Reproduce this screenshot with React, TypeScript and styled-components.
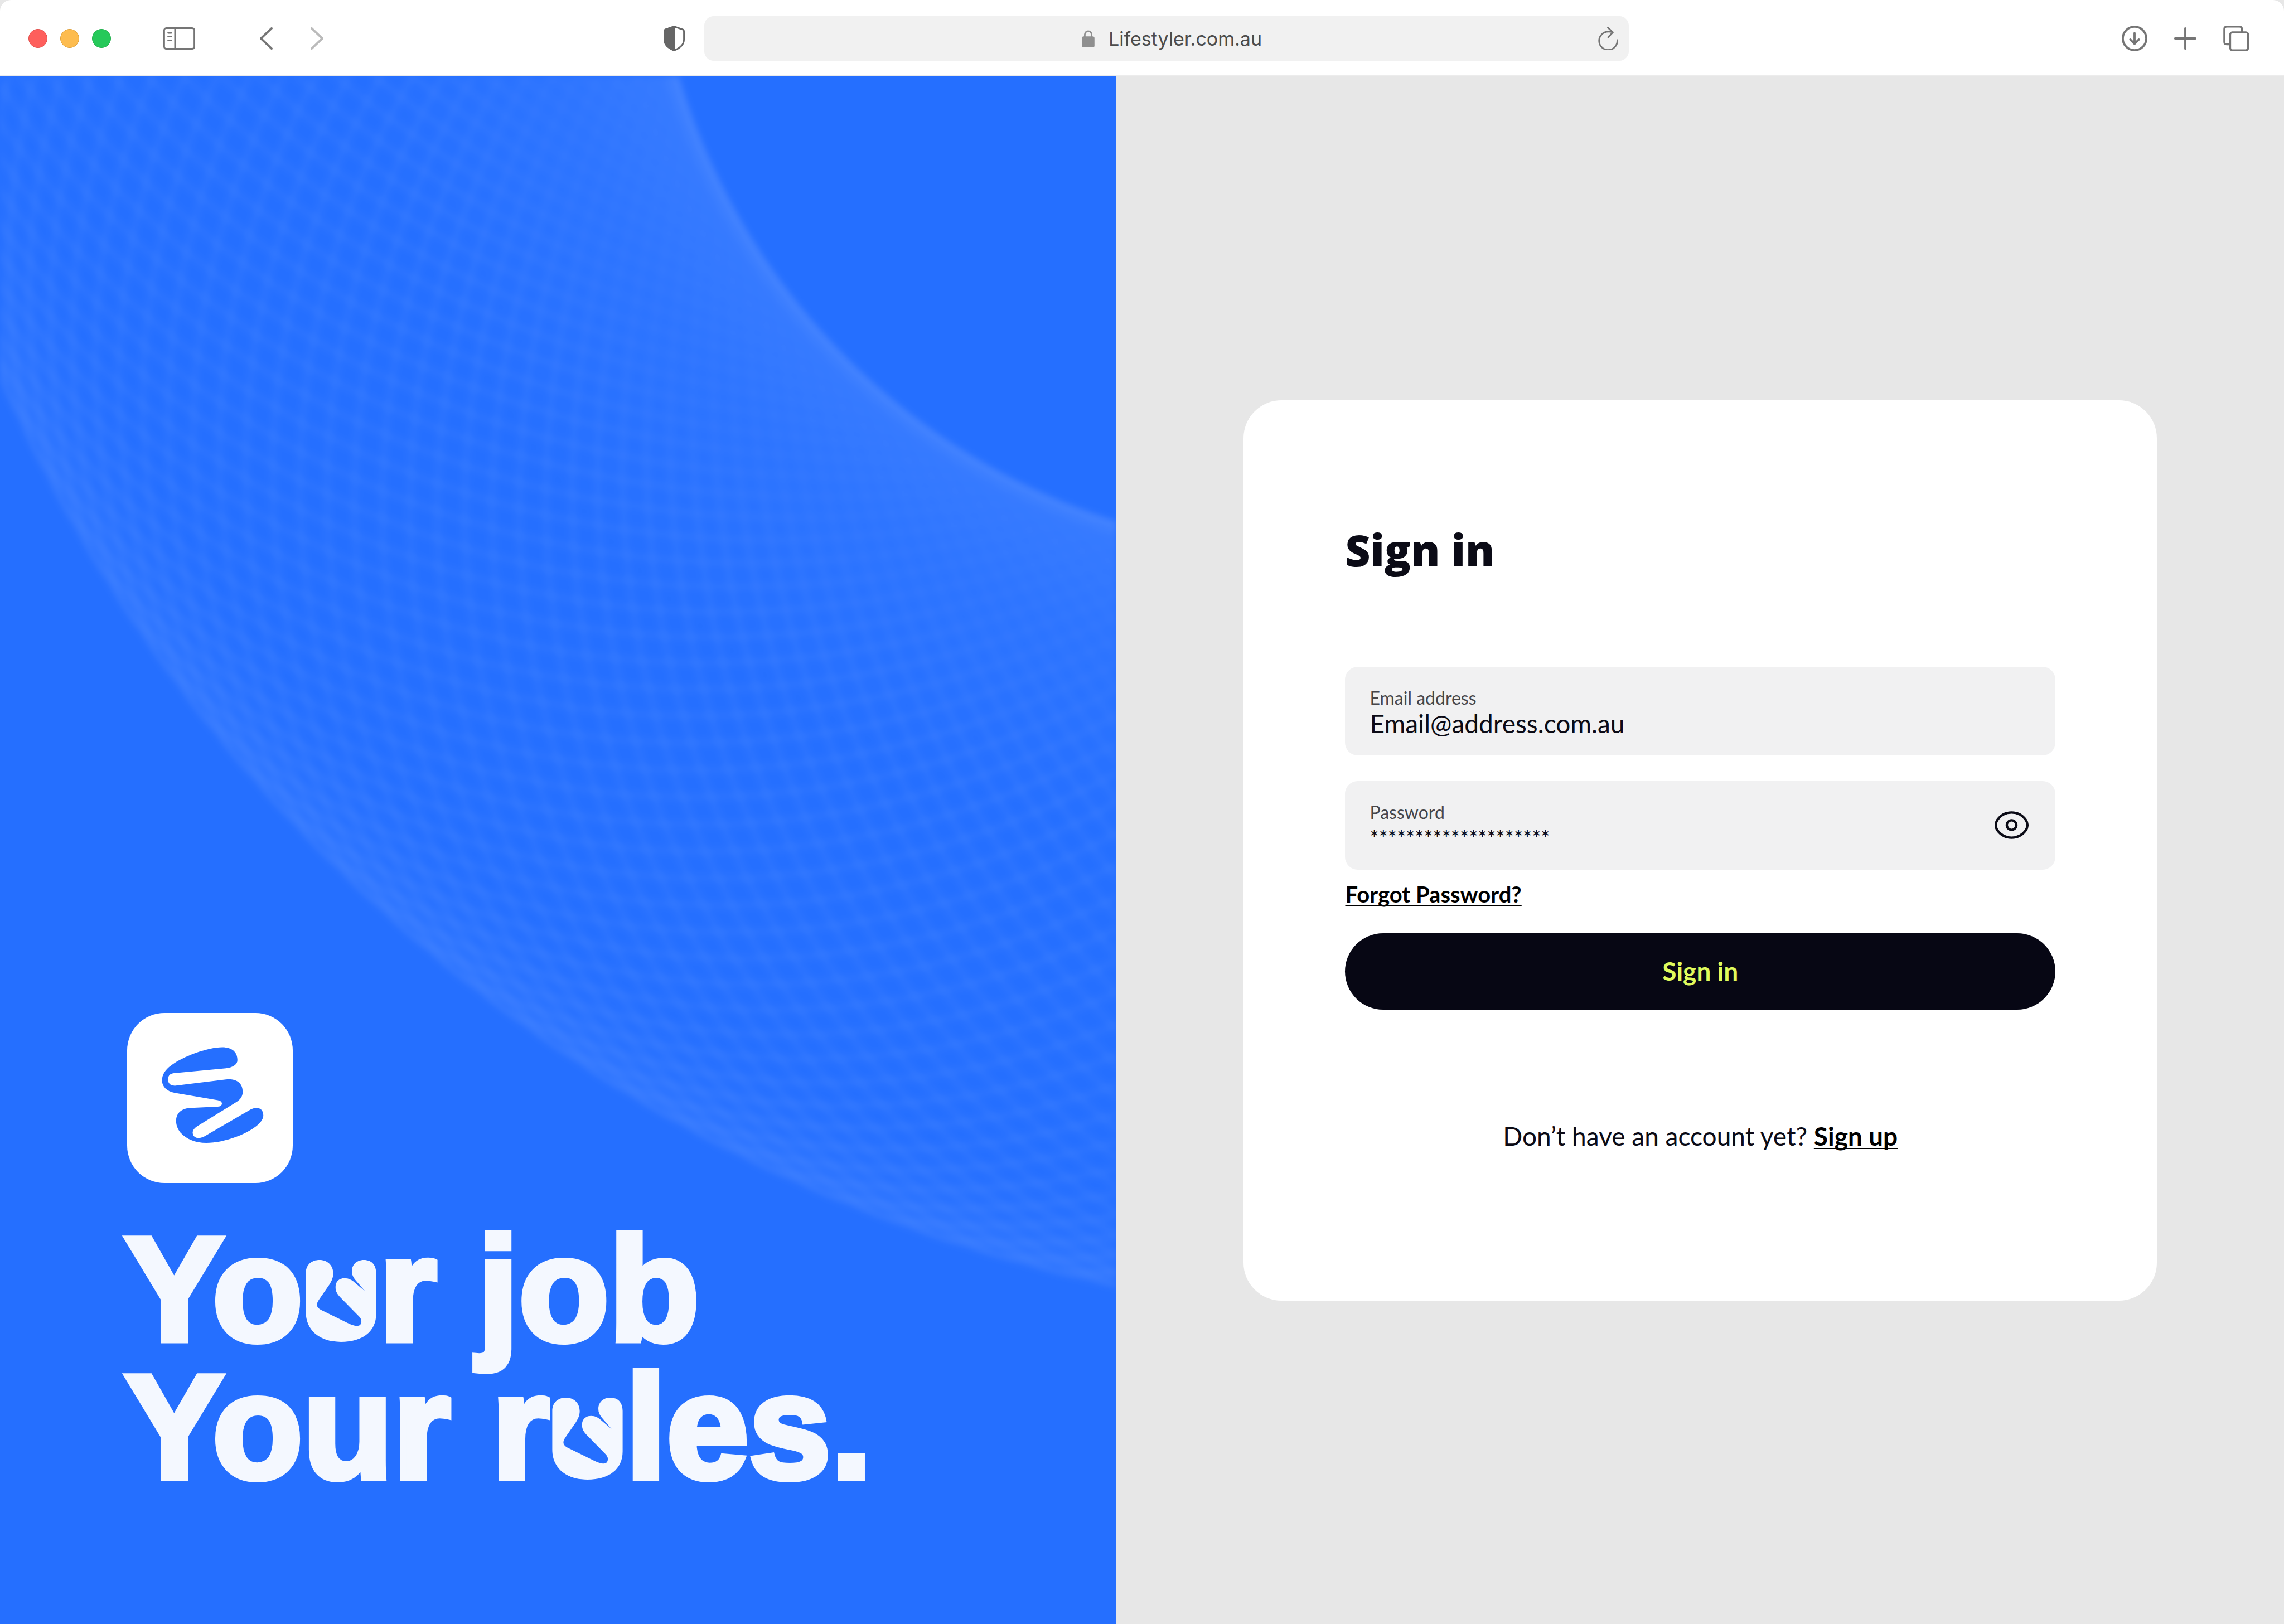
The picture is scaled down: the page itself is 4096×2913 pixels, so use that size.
import React, { useState } from "react";
import styled, { createGlobalStyle } from "styled-components";

const GlobalStyle = createGlobalStyle`
  *, *::before, *::after { box-sizing: border-box; }
  body { margin: 0; background: #e7e7e7; font-family: Lato, "Open Sans", sans-serif; color: #0b0b16; }
  button { border: 0; padding: 0; background: none; font: inherit; color: inherit; cursor: pointer; }
  input { border: 0; padding: 0; margin: 0; background: none; font: inherit; color: inherit; outline: none; }
  h1, h2, p { margin: 0; }
  svg { display: block; }
`;

const Page = styled.div`
  min-height: 100vh;
  display: flex;
  flex-direction: column;
`;

const Toolbar = styled.header`
  height: 137px;
  display: grid;
  grid-template-columns: 1139fr 1731fr 1112fr;
  align-items: center;
  padding: 3px 63px 0 51px;
  background: #fff;
  border-bottom: 3px solid #ececec;
  border-radius: 20px 20px 0 0;
  color: #757575;
`;

const Group = styled.div<{ $gap: number; $end?: boolean }>`
  display: flex;
  align-items: center;
  gap: ${(p) => p.$gap}px;
  justify-content: ${(p) => (p.$end ? "flex-end" : "flex-start")};
`;

const Light = styled.button<{ $fill: string; $edge: string }>`
  width: 34px;
  height: 34px;
  border-radius: 50%;
  background: ${(p) => p.$fill};
  border: 1px solid ${(p) => p.$edge};
`;

const ToolButton = styled.button<{ $dim?: boolean }>`
  flex: none;
  color: ${(p) => (p.$dim ? "#bababa" : "inherit")};
`;

const LeftTools = styled(Group)`
  > :nth-child(2) { margin-left: 94px; }
  > :nth-child(3) { margin-left: 116px; }
  > :nth-child(4) { margin-left: 68px; }
`;

const AddressBar = styled.div`
  flex: 1;
  height: 80px;
  display: grid;
  grid-template-columns: 1fr auto 1fr;
  align-items: center;
  padding: 0 19px 0 38px;
  border-radius: 17px;
  background: #f1f1f1;
`;

const Address = styled.label`
  display: flex;
  align-items: center;
  gap: 25px;
  grid-column: 2;
  padding-top: 2px;
`;

const AddressInput = styled.input`
  field-sizing: content;
  height: 44px;
  font: 400 34px/44px Inter, sans-serif;
  color: #4c4c4c;
`;

const Reload = styled(ToolButton)`
  justify-self: end;
`;

const Main = styled.main`
  flex: 1;
  display: grid;
  grid-template-columns: 22fr 23fr;
`;

const Hero = styled.section`
  position: relative;
  overflow: hidden;
  display: flex;
  flex-direction: column;
  justify-content: flex-end;
  gap: 67px;
  padding: 0 224px 230px;
  background: #256fff;
`;

const Backdrop = styled.svg`
  position: absolute;
  inset: 0;
  width: 100%;
  height: 100%;
`;

const LogoTile = styled.div`
  position: relative;
  width: 297px;
  height: 305px;
  margin-left: 4px;
  border-radius: 67px;
  background: #fff;
  overflow: hidden;
`;

const Slogan = styled.h1`
  position: relative;
  font: 700 265px/247px "Liberation Sans", Arial, sans-serif;
  -webkit-text-stroke: 11px #f4f8ff;
  color: #f4f8ff;
  white-space: nowrap;
`;

const SloganLine = styled.span`
  display: block;
`;

const HandLetter = styled.svg`
  display: inline-block;
  width: 127px;
  height: 147px;
  margin: 0 5px;
  vertical-align: -3px;
`;

const Side = styled.section`
  display: flex;
  flex-direction: column;
  justify-content: center;
  padding: 0 228px;
  background: #e7e7e7;
`;

const Card = styled.form`
  display: flex;
  flex-direction: column;
  padding: 220px 182px 269px;
  border-radius: 68px;
  background: #fff;
`;

const Title = styled.h2`
  margin-bottom: 162px;
  font: 800 78px/96px "Open Sans", sans-serif;
`;

const Fields = styled.div`
  display: flex;
  flex-direction: column;
  gap: 46px;
`;

const Field = styled.div`
  display: flex;
  align-items: center;
  justify-content: space-between;
  padding: 0 48px 0 44px;
  height: 159px;
  border-radius: 23px;
  background: #f1f1f2;
`;

const FieldText = styled.div`
  flex: 1;
  display: flex;
  flex-direction: column;
  gap: 2px;
  padding-top: 8px;
`;

const FieldLabel = styled.label`
  font-size: 32px;
  line-height: 36px;
  color: #46464b;
`;

const FieldInput = styled.input<{ $masked?: boolean }>`
  width: 100%;
  height: 52px;
  font-size: ${(p) => (p.$masked ? 38 : 46)}px;
  line-height: 52px;
`;

const TextLink = styled.a`
  color: #000;
  font-weight: 700;
  text-decoration: underline;
  text-decoration-thickness: 2px;
  text-decoration-skip-ink: none;
  text-underline-offset: 4px;
`;

const Forgot = styled.p`
  margin: 20px 0 46px;
  font-size: 40px;
  line-height: 48px;
`;

const Submit = styled.button`
  height: 137px;
  border-radius: 69px;
  background: #070714;
  color: #e0fb5c;
  font-size: 46px;
  line-height: 52px;
  font-weight: 700;
`;

const SignUp = styled.p`
  margin-top: 201px;
  text-align: center;
  font-size: 46px;
  line-height: 52px;
`;

/* Hero artwork: a torus wire mesh seen between two large circles. */
const OUTER = { x: 2721, y: -616, r: 2971 };
const INNER = { x: 2490, y: -358, r: 1258 };

function meshPoint(angle: number, t: number) {
  const f = 0.5 * t + 0.25 * (1 - Math.cos(t * Math.PI));
  const c = Math.cos(angle);
  const s = Math.sin(angle);
  const x = (OUTER.x + OUTER.r * c) * (1 - f) + (INNER.x + INNER.r * c) * f;
  const y = (OUTER.y + OUTER.r * s) * (1 - f) + (INNER.y + INNER.r * s) * f;
  return `${x.toFixed(0)} ${y.toFixed(0)}`;
}

function meshPath(direction: number) {
  const step = (Math.PI * 2) / 160;
  const parts: string[] = [];
  for (let a = 0.6; a < 4.2; a += step) {
    const pts: string[] = [];
    for (let i = 0; i <= 24; i++) {
      const t = i / 24;
      pts.push(meshPoint(a + direction * t * 1.1, t));
    }
    parts.push("M" + pts.join("L"));
  }
  return parts.join("");
}

const MESH_A = meshPath(1);
const MESH_B = meshPath(-1);

function HeroArt() {
  return (
    <Backdrop viewBox="0 0 2112 2928" preserveAspectRatio="xMidYMid slice" aria-hidden="true">
      <defs>
        <radialGradient id="innerGlow" gradientUnits="userSpaceOnUse" cx={INNER.x} cy={INNER.y} r={2000}>
          <stop offset="0.629" stopColor="#fff" stopOpacity="0.15" />
          <stop offset="0.645" stopColor="#fff" stopOpacity="0.075" />
          <stop offset="0.74" stopColor="#fff" stopOpacity="0.035" />
          <stop offset="0.92" stopColor="#fff" stopOpacity="0" />
        </radialGradient>
        <radialGradient id="outerGlow" gradientUnits="userSpaceOnUse" cx={OUTER.x} cy={OUTER.y} r={OUTER.r}>
          <stop offset="0.94" stopColor="#fff" stopOpacity="0" />
          <stop offset="0.98" stopColor="#fff" stopOpacity="0.02" />
          <stop offset="1" stopColor="#fff" stopOpacity="0.05" />
        </radialGradient>
        <radialGradient id="meshFade" gradientUnits="userSpaceOnUse" cx={INNER.x} cy={INNER.y} r={3000}>
          <stop offset="0.42" stopColor="#fff" stopOpacity="0.1" />
          <stop offset="0.6" stopColor="#fff" stopOpacity="1" />
        </radialGradient>
        <mask id="ring" maskUnits="userSpaceOnUse" x="0" y="0" width="2112" height="2928">
          <circle cx={OUTER.x} cy={OUTER.y} r={OUTER.r} fill="#fff" />
          <circle cx={INNER.x} cy={INNER.y} r={INNER.r} fill="#000" />
        </mask>
        <filter id="soft" filterUnits="userSpaceOnUse" x="0" y="0" width="2112" height="2928">
          <feGaussianBlur stdDeviation="6" />
        </filter>
      </defs>
      <g filter="url(#soft)">
        <g mask="url(#ring)">
          <rect width="2112" height="2928" fill="url(#innerGlow)" />
          <rect width="2112" height="2928" fill="url(#outerGlow)" />
          <g fill="none" stroke="url(#meshFade)" strokeWidth="15" opacity="0.032">
            <path d={MESH_A} />
          </g>
          <g fill="none" stroke="url(#meshFade)" strokeWidth="15" opacity="0.032">
            <path d={MESH_B} />
          </g>
        </g>
      </g>
    </Backdrop>
  );
}

function Logo() {
  return (
    <svg viewBox="120 108 940 966" width="100%" height="100%" preserveAspectRatio="none" role="img" aria-label="Lifestyler">
      <path
        fill="#256fff"
        d="M660 303C715 303 746 330 746 376C746 402 720 418 680 422L385 450C362 452 352 466 352 486C352 508 366 521 390 521L680 486C740 480 776 505 776 556C776 584 760 602 735 617L520 750C500 763 492 775 492 789C494 812 512 820 530 818C540 817 552 813 562 807L820 657C860 635 893 650 893 690C893 740 800 790 740 811C680 833 620 846 570 846C470 846 398 790 398 722C398 675 430 648 485 647L635 640C650 640 658 632 658 623C658 614 650 607 635 604L390 562C345 553 318 525 318 492C318 460 335 432 370 406C440 353 580 303 660 303Z"
      />
    </svg>
  );
}

function Hand() {
  return (
    <HandLetter viewBox="56 54 400 466" role="img" aria-label="u">
      <path
        fill="currentColor"
        d="M56 130C56 80 90 54 134 54C180 54 212 86 212 130C212 155 202 176 190 194L132 278C112 306 116 324 142 338L295 413C350 440 372 430 372 402C372 388 362 378 354 370L252 266C235 248 225 234 225 208C225 178 245 158 276 158C300 158 318 168 334 182L393 232L338 168C325 152 318 138 318 118C318 82 344 54 386 54C430 54 456 82 456 130L456 360C456 460 380 520 256 520C130 520 56 450 56 350Z"
      />
    </HandLetter>
  );
}

function BrowserBar() {
  const [url, setUrl] = useState("Lifestyler.com.au");
  return (
    <Toolbar>
      <LeftTools $gap={0}>
        <Group $gap={23}>
          <Light type="button" aria-label="Close" $fill="#fe5f5c" $edge="#e2504d" />
          <Light type="button" aria-label="Minimise" $fill="#fdbc4f" $edge="#dea03a" />
          <Light type="button" aria-label="Zoom" $fill="#26c95a" $edge="#22b14d" />
        </Group>
        <ToolButton type="button" aria-label="Sidebar">
          <svg width="57" height="40" viewBox="0 0 60 42" fill="none" stroke="currentColor" strokeWidth="3">
            <rect x="1.5" y="1.5" width="57" height="39" rx="4" />
            <path d="M22 1.500v39" />
            <path d="M9 10.500h6M9 17.500h6M9 24.500h6" strokeLinecap="round" />
          </svg>
        </ToolButton>
        <ToolButton type="button" aria-label="Back">
          <svg width="23" height="40" viewBox="0 0 24 42" fill="none" stroke="currentColor" strokeWidth="4" strokeLinecap="round" strokeLinejoin="round">
            <path d="M22 2L2 21L22 40" />
          </svg>
        </ToolButton>
        <ToolButton type="button" aria-label="Forward" $dim>
          <svg width="23" height="40" viewBox="0 0 24 42" fill="none" stroke="currentColor" strokeWidth="4" strokeLinecap="round" strokeLinejoin="round">
            <path d="M2 2L22 21L2 40" />
          </svg>
        </ToolButton>
      </LeftTools>
      <Group $gap={35}>
        <ToolButton type="button" aria-label="Privacy report">
          <svg width="38" height="46" viewBox="0 0 40 48" fill="none" stroke="#666" strokeWidth="3" strokeLinejoin="round">
            <path d="M20 1.500L36 7Q38.500 8 38.500 11V26C38.500 36 31 42 20 46.500C9 42 1.500 36 1.500 26V11Q1.500 8 4 7Z" />
            <path d="M20 1.500L4 7Q1.500 8 1.500 11V26C1.500 36 9 42 20 46.500Z" fill="#666" />
          </svg>
        </ToolButton>
        <AddressBar>
          <Address>
            <svg width="23" height="31" viewBox="0 0 24 33">
              <path d="M5.500 13V8.500a6.500 6.500 0 0 1 13 0V13" fill="none" stroke="#8f8f8f" strokeWidth="3" />
              <rect y="12" width="24" height="21" rx="3.500" fill="#8f8f8f" />
            </svg>
            <AddressInput aria-label="Address" value={url} onChange={(e) => setUrl(e.target.value)} />
          </Address>
          <Reload type="button" aria-label="Reload">
            <svg width="36" height="42" viewBox="0 0 38 45" fill="none" stroke="currentColor" strokeWidth="3" strokeLinecap="round" strokeLinejoin="round">
              <path d="M36.500 25.500A17.500 17.500 0 1 1 19 9.500Q23 9.200 27.500 10.500" />
              <path d="M18.500 1.500L28 10.800L19 20" />
            </svg>
          </Reload>
        </AddressBar>
      </Group>
      <Group $gap={45} $end>
        <ToolButton type="button" aria-label="Downloads">
          <svg width="46" height="46" viewBox="0 0 48 48" fill="none" stroke="currentColor" strokeWidth="4" strokeLinecap="round" strokeLinejoin="round">
            <circle cx="24" cy="24" r="22" />
            <path d="M24 14V33M16 26L24 34L32 26" />
          </svg>
        </ToolButton>
        <ToolButton type="button" aria-label="New tab">
          <svg width="46" height="46" viewBox="0 0 48 48" fill="none" stroke="currentColor" strokeWidth="4" strokeLinecap="round">
            <path d="M24 5V43M5 24H43" />
          </svg>
        </ToolButton>
        <ToolButton type="button" aria-label="Show tabs">
          <svg width="46" height="46" viewBox="0 0 48 48" fill="none" stroke="currentColor" strokeWidth="3.500">
            <path d="M12 35H6.500Q2 35 2 30.500V6.500Q2 2 6.500 2H30.500Q35 2 35 6.500V12" />
            <rect x="13" y="12.500" width="33.500" height="33.500" rx="4" />
          </svg>
        </ToolButton>
      </Group>
    </Toolbar>
  );
}

function SignInCard() {
  const [email, setEmail] = useState("Email@address.com.au");
  const [password, setPassword] = useState("********************");
  return (
    <Card onSubmit={(e) => e.preventDefault()}>
      <Title>Sign in</Title>
      <Fields>
        <Field>
          <FieldText>
            <FieldLabel htmlFor="email">Email address</FieldLabel>
            <FieldInput id="email" value={email} onChange={(e) => setEmail(e.target.value)} />
          </FieldText>
        </Field>
        <Field>
          <FieldText>
            <FieldLabel htmlFor="password">Password</FieldLabel>
            <FieldInput $masked id="password" value={password} onChange={(e) => setPassword(e.target.value)} />
          </FieldText>
          <ToolButton type="button" aria-label="Show password">
            <svg width="61" height="50" viewBox="0 0 64 52" fill="none" stroke="#0b0b16" strokeWidth="4.500">
              <path d="M32 2.300C45 2.300 53 8 59 16.500Q64.500 26 59 35.500C53 44 45 49.700 32 49.700C19 49.700 11 44 5 35.500Q-0.500 26 5 16.500C11 8 19 2.300 32 2.300Z" />
              <circle cx="32" cy="26" r="9" />
            </svg>
          </ToolButton>
        </Field>
      </Fields>
      <Forgot>
        <TextLink href="#forgot">Forgot Password?</TextLink>
      </Forgot>
      <Submit type="submit">Sign in</Submit>
      <SignUp>
        Don’t have an account yet? <TextLink href="#signup">Sign up</TextLink>
      </SignUp>
    </Card>
  );
}

export default function App() {
  return (
    <>
      <GlobalStyle />
      <Page>
        <BrowserBar />
        <Main>
          <Hero>
            <HeroArt />
            <LogoTile>
              <Logo />
            </LogoTile>
            <Slogan>
              <SloganLine>
                Yo<Hand />r job
              </SloganLine>
              <SloganLine>
                Your r<Hand />les.
              </SloganLine>
            </Slogan>
          </Hero>
          <Side>
            <SignInCard />
          </Side>
        </Main>
      </Page>
    </>
  );
}
